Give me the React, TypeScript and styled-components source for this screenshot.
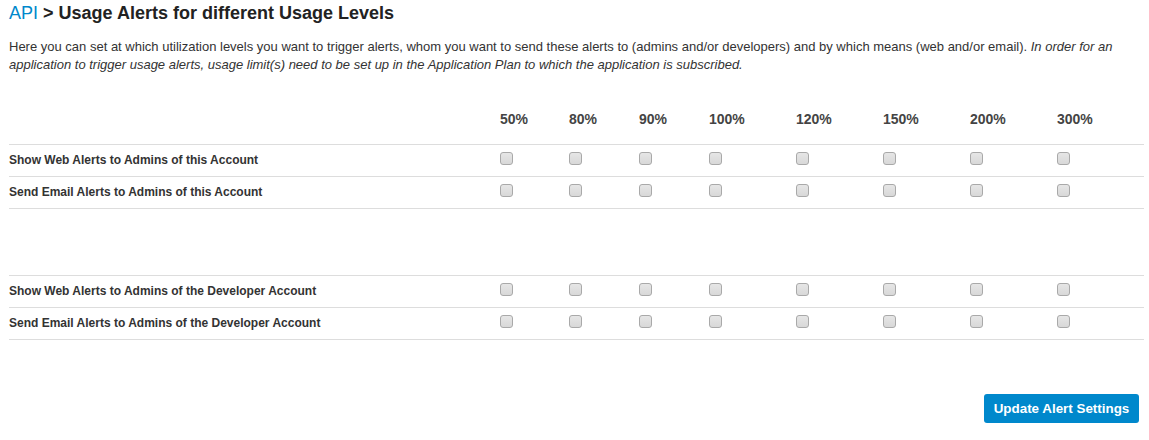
import React from "react";
import styled, { createGlobalStyle } from "styled-components";

const Global = createGlobalStyle`
  html, body { margin: 0; padding: 0; background: #fff; }
  body { font-family: "Liberation Sans", Arial, sans-serif; color: #333; }
`;

const Page = styled.div`
  padding: 3px 5px 0 9px;
  width: 1135px;
`;

const Title = styled.h1`
  margin: 0;
  font-size: 18px;
  line-height: 21px;
  font-weight: bold;
  color: #222;
`;

const Crumb = styled.a`
  color: #0088cc;
  font-weight: normal;
  text-decoration: none;
`;

const Intro = styled.p`
  margin: 14px 0 0;
  font-size: 13px;
  line-height: 18px;
  color: #333;
  em { font-style: italic; }
`;

const Table = styled.div`
  margin-top: 28px;
`;

const cols = "491px 69px 70px 70px 87px 87px 87px 87px 87px";

const HeadRow = styled.div`
  display: grid;
  grid-template-columns: ${cols};
  height: 42px;
  border-bottom: 1px solid #ddd;
`;

const HeadCell = styled.div`
  font-size: 14px;
  font-weight: bold;
  color: #444;
  line-height: 16px;
  padding-top: 9px;
`;

const Row = styled.div`
  display: grid;
  grid-template-columns: ${cols};
  height: 31px;
  border-bottom: 1px solid #ddd;
  align-items: center;
`;

const Gap = styled.div<{ $h: number }>`
  height: ${(p) => p.$h}px;
  border-bottom: 1px solid #ddd;
`;

const Label = styled.div`
  font-size: 12px;
  font-weight: bold;
  color: #333;
  padding-bottom: 2px;
`;

const Cell = styled.div`
  display: flex;
  align-items: center;
  height: 100%;
  padding-bottom: 5px;
  box-sizing: border-box;
`;

const Box = styled.input`
  appearance: none;
  -webkit-appearance: none;
  margin: 0;
  width: 13px;
  height: 13px;
  border: 1px solid #a9a9a9;
  border-radius: 3px;
  background: linear-gradient(#e6e6e6, #d8d8d8);
  box-sizing: border-box;
`;

const Footer = styled.div`
  display: flex;
  justify-content: flex-end;
  padding-right: 5px;
  margin-top: 54px;
`;

const Button = styled.button`
  background: #0088cc;
  color: #fff;
  border: none;
  border-radius: 3px;
  font-family: "Liberation Sans", Arial, sans-serif;
  font-size: 13.4px;
  font-weight: bold;
  height: 29px;
  width: 155px;
  padding: 0;
`;

const levels = ["50%", "80%", "90%", "100%", "120%", "150%", "200%", "300%"];

const groupA = [
  "Show Web Alerts to Admins of this Account",
  "Send Email Alerts to Admins of this Account",
];
const groupB = [
  "Show Web Alerts to Admins of the Developer Account",
  "Send Email Alerts to Admins of the Developer Account",
];

const AlertRow = ({ label }: { label: string }) => (
  <Row>
    <Label>{label}</Label>
    {levels.map((l) => (
      <Cell key={l}>
        <Box type="checkbox" aria-label={`${label} ${l}`} />
      </Cell>
    ))}
  </Row>
);

export default function App() {
  return (
    <>
      <Global />
      <Page>
        <Title>
          <Crumb href="#">API</Crumb> &gt; Usage Alerts for different Usage Levels
        </Title>
        <Intro>
          Here you can set at which utilization levels you want to trigger alerts, whom you want to send these
          alerts to (admins and/or developers) and by which means (web and/or email).{" "}
          <em>
            In order for an application to trigger usage alerts, usage limit(s) need to be set up in the
            Application Plan to which the application is subscribed.
          </em>
        </Intro>
        <Table>
          <HeadRow>
            <HeadCell />
            {levels.map((l) => (
              <HeadCell key={l}>{l}</HeadCell>
            ))}
          </HeadRow>
          {groupA.map((g) => (
            <AlertRow key={g} label={g} />
          ))}
          <Gap $h={66} />
          {groupB.map((g) => (
            <AlertRow key={g} label={g} />
          ))}
        </Table>
        <Footer>
          <Button>Update Alert Settings</Button>
        </Footer>
      </Page>
    </>
  );
}
